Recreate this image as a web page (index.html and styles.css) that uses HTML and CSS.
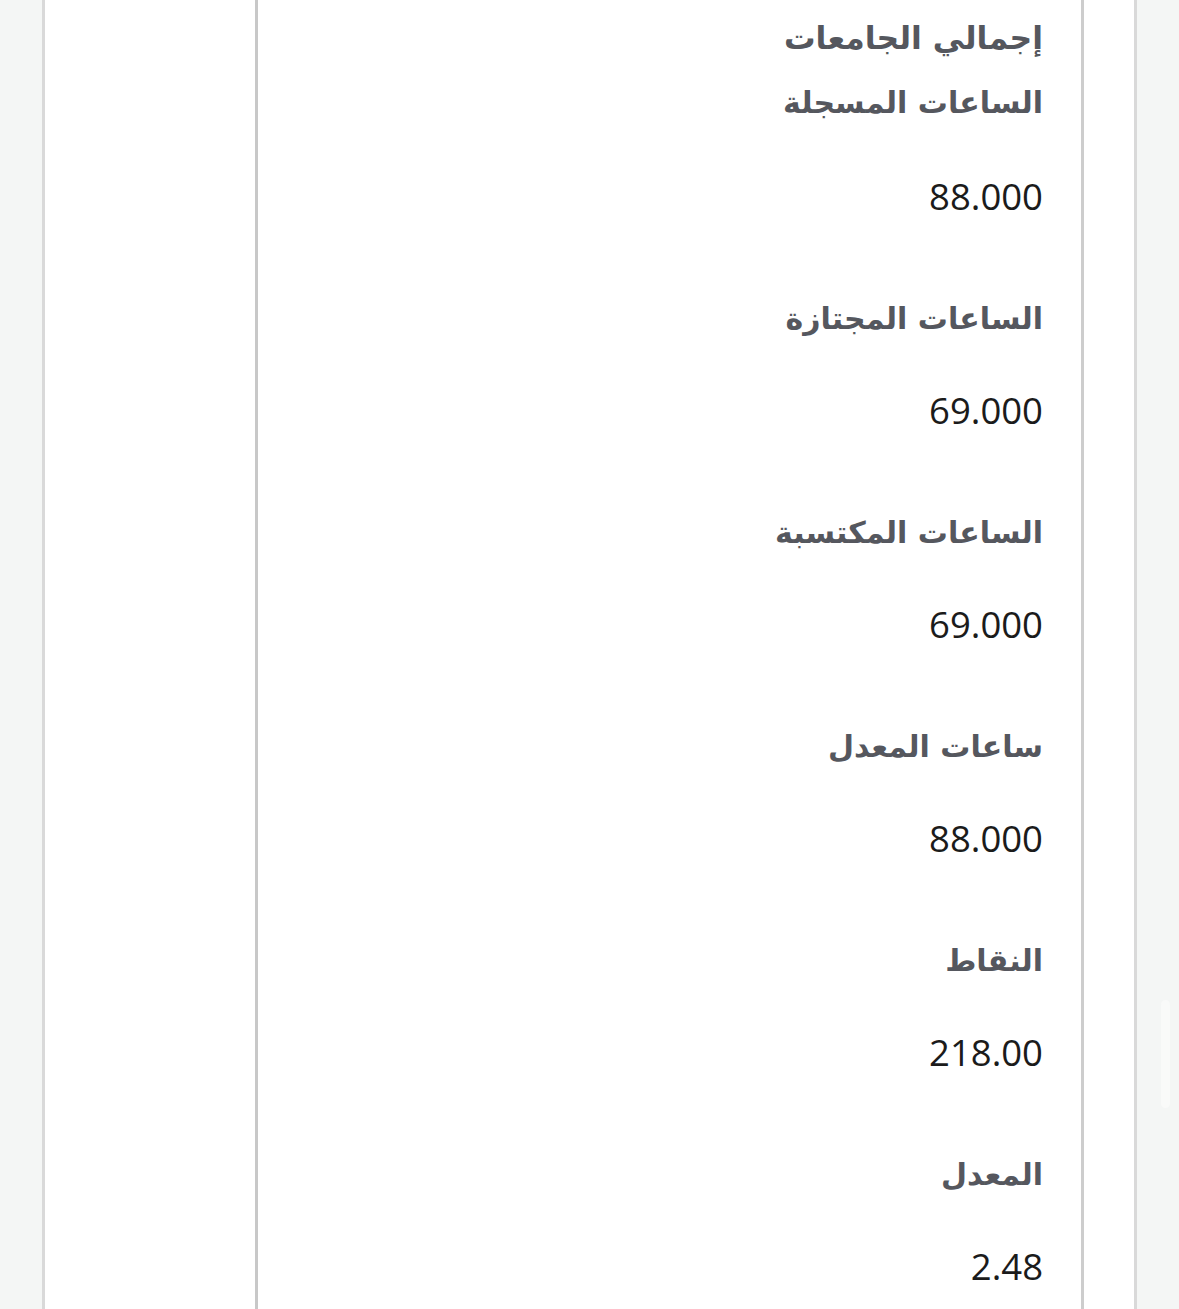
FILE: index.html
```html
<!DOCTYPE html>
<html lang="ar">
<head>
<meta charset="utf-8">
<link rel="stylesheet" href="styles.css">
</head>
<body>
<div class="page">
  <div class="outer">
    <div class="inner" dir="rtl">
      <div class="title">إجمالي الجامعات</div>
      <dl class="stats">
        <dt>الساعات المسجلة</dt>
        <dd>88.000</dd>
        <dt>الساعات المجتازة</dt>
        <dd>69.000</dd>
        <dt>الساعات المكتسبة</dt>
        <dd>69.000</dd>
        <dt>ساعات المعدل</dt>
        <dd>88.000</dd>
        <dt>النقاط</dt>
        <dd>218.00</dd>
        <dt>المعدل</dt>
        <dd>2.48</dd>
      </dl>
    </div>
  </div>
  <div class="scroll-thumb"></div>
</div>
</body>
</html>
```
FILE: styles.css
```css
html, body {
  margin: 0;
  padding: 0;
  height: 100%;
  overflow: hidden;
}
body {
  background: #f4f6f5;
}
.page {
  position: relative;
  height: 1309px;
  display: flex;
}
.outer {
  margin-left: 42px;
  width: 1095px;
  box-sizing: border-box;
  border-left: 3px solid #d9d9d9;
  border-right: 3px solid #d9d9d9;
  background: #ffffff;
  display: flex;
  flex-shrink: 0;
}
.inner {
  margin-left: 210px;
  width: 829px;
  box-sizing: border-box;
  flex-shrink: 0;
  border-left: 3px solid #c8c8c8;
  border-right: 3px solid #cdcdcd;
  background: #ffffff;
  padding: 18px 38px 0 0;
}
.title, .stats dt {
  font-family: "DejaVu Sans", sans-serif;
  font-weight: bold;
  font-size: 30px;
  color: #55575e;
  line-height: 40px;
}
.title {
  font-size: 31.5px;
}
.stats {
  margin: 0;
  padding: 0;
}
.stats dt {
  margin-top: 83px;
}
.stats dt:first-child {
  margin-top: 25px;
}
.stats dd {
  margin: 51px 0 0 0;
  font-family: "Open Sans", "Noto Sans", sans-serif;
  font-size: 36.5px;
  line-height: 40px;
  color: #1b1b1b;
  direction: ltr;
  text-align: right;
}
.stats dt:first-child + dd {
  margin-top: 53px;
}
.scroll-thumb {
  position: absolute;
  left: 1161px;
  top: 1000px;
  width: 9px;
  height: 108px;
  border-radius: 5px;
  background: #f9faf9;
}
```
